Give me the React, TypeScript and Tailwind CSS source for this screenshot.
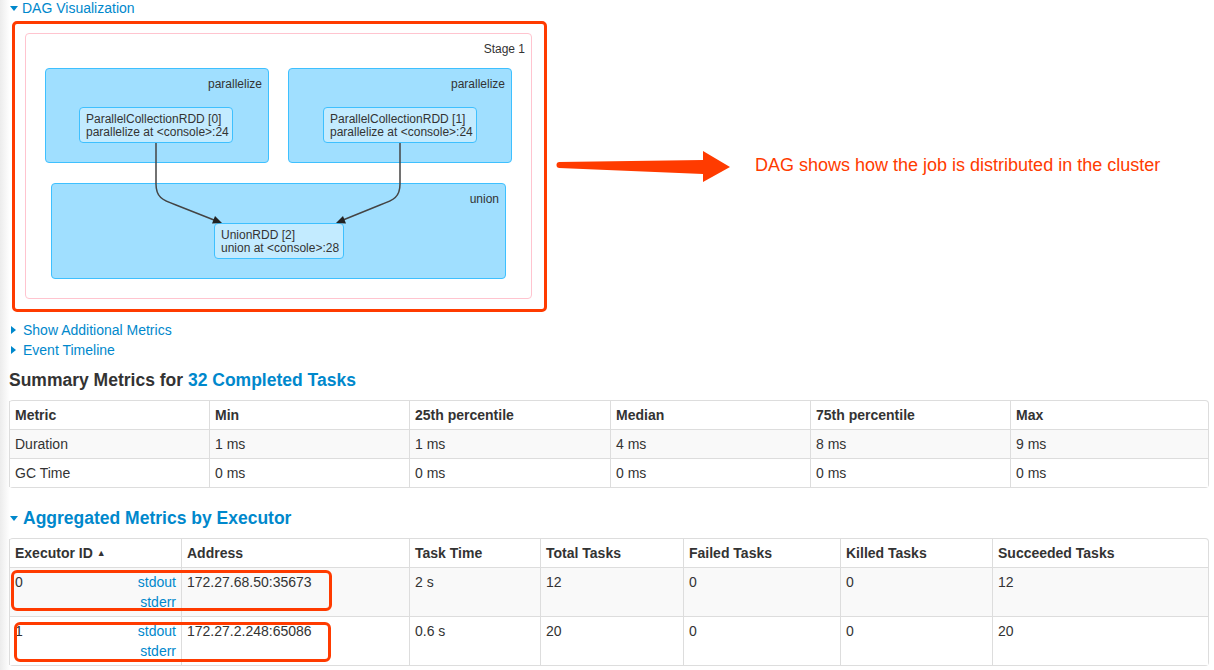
import React from "react";

const CaretDown = () => (
  <svg width="8" height="5" viewBox="0 0 8 5" className="shrink-0">
    <polygon points="0,0 8,0 4,5" fill="#0088cc" />
  </svg>
);

const CaretRight = () => (
  <svg width="5" height="8" viewBox="0 0 5 8" className="shrink-0">
    <polygon points="0,0 5,4 0,8" fill="#0088cc" />
  </svg>
);

function DagNode({ l1, l2, className }: { l1: string; l2: string; className: string }) {
  return (
    <div
      className={`absolute h-[36px] rounded-[4px] border border-[#3ec0ff] bg-[#c3ebff] px-[6px] pt-[5px] text-[12px] leading-[13px] text-[#333] ${className}`}
    >
      <div className="whitespace-nowrap">{l1}</div>
      <div className="whitespace-nowrap">{l2}</div>
    </div>
  );
}

function Cluster({
  label,
  className,
  children,
}: {
  label: string;
  className: string;
  children: React.ReactNode;
}) {
  return (
    <div className={`absolute rounded-[4px] border border-[#3ec0ff] bg-[#a0dfff] ${className}`}>
      <div className="absolute right-[6px] top-[7px] text-[12px] leading-[16px] text-[#333]">{label}</div>
      {children}
    </div>
  );
}

const th = "border-l border-[#ddd] px-[5px] py-[4px] text-left align-top font-bold leading-5";
const td = "border-l border-t border-[#ddd] px-[5px] py-[4px] text-left align-top leading-5";

export default function App() {
  const summaryRows = [
    ["Duration", "1 ms", "1 ms", "4 ms", "8 ms", "9 ms"],
    ["GC Time", "0 ms", "0 ms", "0 ms", "0 ms", "0 ms"],
  ];
  const execRows = [
    { id: "0", addr: "172.27.68.50:35673", time: "2 s", total: "12", failed: "0", killed: "0", ok: "12" },
    { id: "1", addr: "172.27.2.248:65086", time: "0.6 s", total: "20", failed: "0", killed: "0", ok: "20" },
  ];
  return (
    <div className="relative h-[670px] w-[1214px] overflow-hidden bg-[linear-gradient(to_right,#ececec,#ffffff_10px)] font-['Liberation_Sans',Arial,sans-serif] text-[14px] leading-5 text-[#333]">
      {/* DAG Visualization toggle */}
      <div className="-mt-[2px] flex h-5 items-center gap-[4px] pl-[10px] text-[#0088cc]">
        <CaretDown />
        <span>DAG Visualization</span>
      </div>

      {/* DAG row */}
      <div className="mt-[3px] flex items-center">
        <div className="ml-[12px] h-[291px] w-[535px] shrink-0 rounded-[5px] border-[3px] border-[#ff3b00] pl-[10px] pt-[9px]">
          <div className="relative h-[266px] w-[507px] rounded-[4px] border border-[#ffc4cf] bg-white">
            <div className="absolute right-[6px] top-[7px] text-[12px] leading-[16px] text-[#333]">Stage 1</div>
            <Cluster label="parallelize" className="left-[19px] top-[34px] h-[95px] w-[224px]">
              <DagNode l1="ParallelCollectionRDD [0]" l2="parallelize at <console>:24" className="left-[33px] top-[38px] w-[154px]" />
            </Cluster>
            <Cluster label="parallelize" className="left-[262px] top-[34px] h-[95px] w-[224px]">
              <DagNode l1="ParallelCollectionRDD [1]" l2="parallelize at <console>:24" className="left-[34px] top-[38px] w-[154px]" />
            </Cluster>
            <Cluster label="union" className="left-[25px] top-[149px] h-[96px] w-[455px]">
              <DagNode l1="UnionRDD [2]" l2="union at <console>:28" className="left-[162px] top-[39px] w-[130px]" />
            </Cluster>
            <svg className="absolute left-0 top-0" width="507" height="266" viewBox="0 0 507 266">
              <path d="M130 109 V150 C130 163 136 166 150 171 L188 186" fill="none" stroke="#444" strokeWidth="1.5" />
              <polygon points="196,189 186,189.6 189,182" fill="#222" />
              <path d="M374 109 V150 C374 163 368 166 354 171 L317 186" fill="none" stroke="#444" strokeWidth="1.5" />
              <polygon points="310,189 320,189.6 317,182" fill="#222" />
            </svg>
          </div>
        </div>
        <svg className="ml-[9px] shrink-0" width="176" height="37" viewBox="0 0 176 37">
          <circle cx="3.5" cy="17" r="3" fill="#ff3b00" />
          <polygon points="3,14 147,12 147,3 174,19 147,34 147,26 3,20" fill="#ff3b00" />
        </svg>
        <div className="mb-[4px] ml-[23px] whitespace-nowrap text-[18px] leading-6 text-[#ff3b00]">
          DAG shows how the job is distributed in the cluster
        </div>
      </div>

      <div className="mt-[8px] flex h-5 items-center gap-[7px] pl-[11px] text-[#0088cc]">
        <CaretRight />
        <span>Show Additional Metrics</span>
      </div>
      <div className="flex h-5 items-center gap-[7px] pl-[11px] text-[#0088cc]">
        <CaretRight />
        <span>Event Timeline</span>
      </div>

      <h4 className="mt-[10px] pl-[9px] text-[17.5px] font-bold leading-5 text-[#333]">
        Summary Metrics for <span className="text-[#0088cc]">32 Completed Tasks</span>
      </h4>

      <table className="ml-[9px] mt-[10px] w-[1200px] table-fixed border-separate border-spacing-0 rounded-[4px] border border-l-0 border-[#ddd]">
        <colgroup>
          <col className="w-[200px]" />
          <col className="w-[200px]" />
          <col className="w-[201px]" />
          <col className="w-[200px]" />
          <col className="w-[200px]" />
          <col className="w-[198px]" />
        </colgroup>
        <thead>
          <tr>
            {["Metric", "Min", "25th percentile", "Median", "75th percentile", "Max"].map((h) => (
              <th key={h} className={th}>
                {h}
              </th>
            ))}
          </tr>
        </thead>
        <tbody>
          {summaryRows.map((r, i) => (
            <tr key={i} className={i % 2 === 0 ? "bg-[#f9f9f9]" : "bg-white"}>
              {r.map((c, j) => (
                <td key={j} className={td}>
                  {c}
                </td>
              ))}
            </tr>
          ))}
        </tbody>
      </table>

      <h4 className="mt-[20px] flex items-center gap-[5px] pl-[10px] text-[17.5px] font-bold leading-5 text-[#0088cc]">
        <CaretDown />
        <span>Aggregated Metrics by Executor</span>
      </h4>

      <div className="relative ml-[9px] mt-[10px] w-[1200px]">
        <table className="w-[1200px] table-fixed border-separate border-spacing-0 rounded-[4px] border border-l-0 border-[#ddd]">
          <colgroup>
            <col className="w-[172px]" />
            <col className="w-[228px]" />
            <col className="w-[131px]" />
            <col className="w-[143px]" />
            <col className="w-[157px]" />
            <col className="w-[152px]" />
            <col className="w-[216px]" />
          </colgroup>
          <thead>
            <tr>
              <th className={`${th} h-[28px]`}>
                <div className="flex h-5 items-center gap-[4px] overflow-hidden">
                  <span>Executor ID</span>
                  <span className="text-[9px] leading-none">▲</span>
                </div>
              </th>
              {["Address", "Task Time", "Total Tasks", "Failed Tasks", "Killed Tasks", "Succeeded Tasks"].map((h) => (
                <th key={h} className={`${th} h-[28px]`}>
                  {h}
                </th>
              ))}
            </tr>
          </thead>
          <tbody>
            {execRows.map((r, i) => (
              <tr key={r.id} className={i % 2 === 0 ? "bg-[#f9f9f9]" : "bg-white"}>
                <td className={td}>
                  <div className="flex justify-between">
                    <span>{r.id}</span>
                    <div className="text-right text-[#0088cc]">
                      <div>stdout</div>
                      <div>stderr</div>
                    </div>
                  </div>
                </td>
                <td className={td}>{r.addr}</td>
                <td className={td}>{r.time}</td>
                <td className={td}>{r.total}</td>
                <td className={td}>{r.failed}</td>
                <td className={td}>{r.killed}</td>
                <td className={td}>{r.ok}</td>
              </tr>
            ))}
          </tbody>
        </table>
        <div className="absolute left-[2px] top-[32px] h-[41px] w-[321px] rounded-[6px] border-[3px] border-[#ff3b00]" />
        <div className="absolute left-[5px] top-[84px] h-[40px] w-[317px] rounded-[6px] border-[3px] border-[#ff3b00]" />
      </div>
    </div>
  );
}
